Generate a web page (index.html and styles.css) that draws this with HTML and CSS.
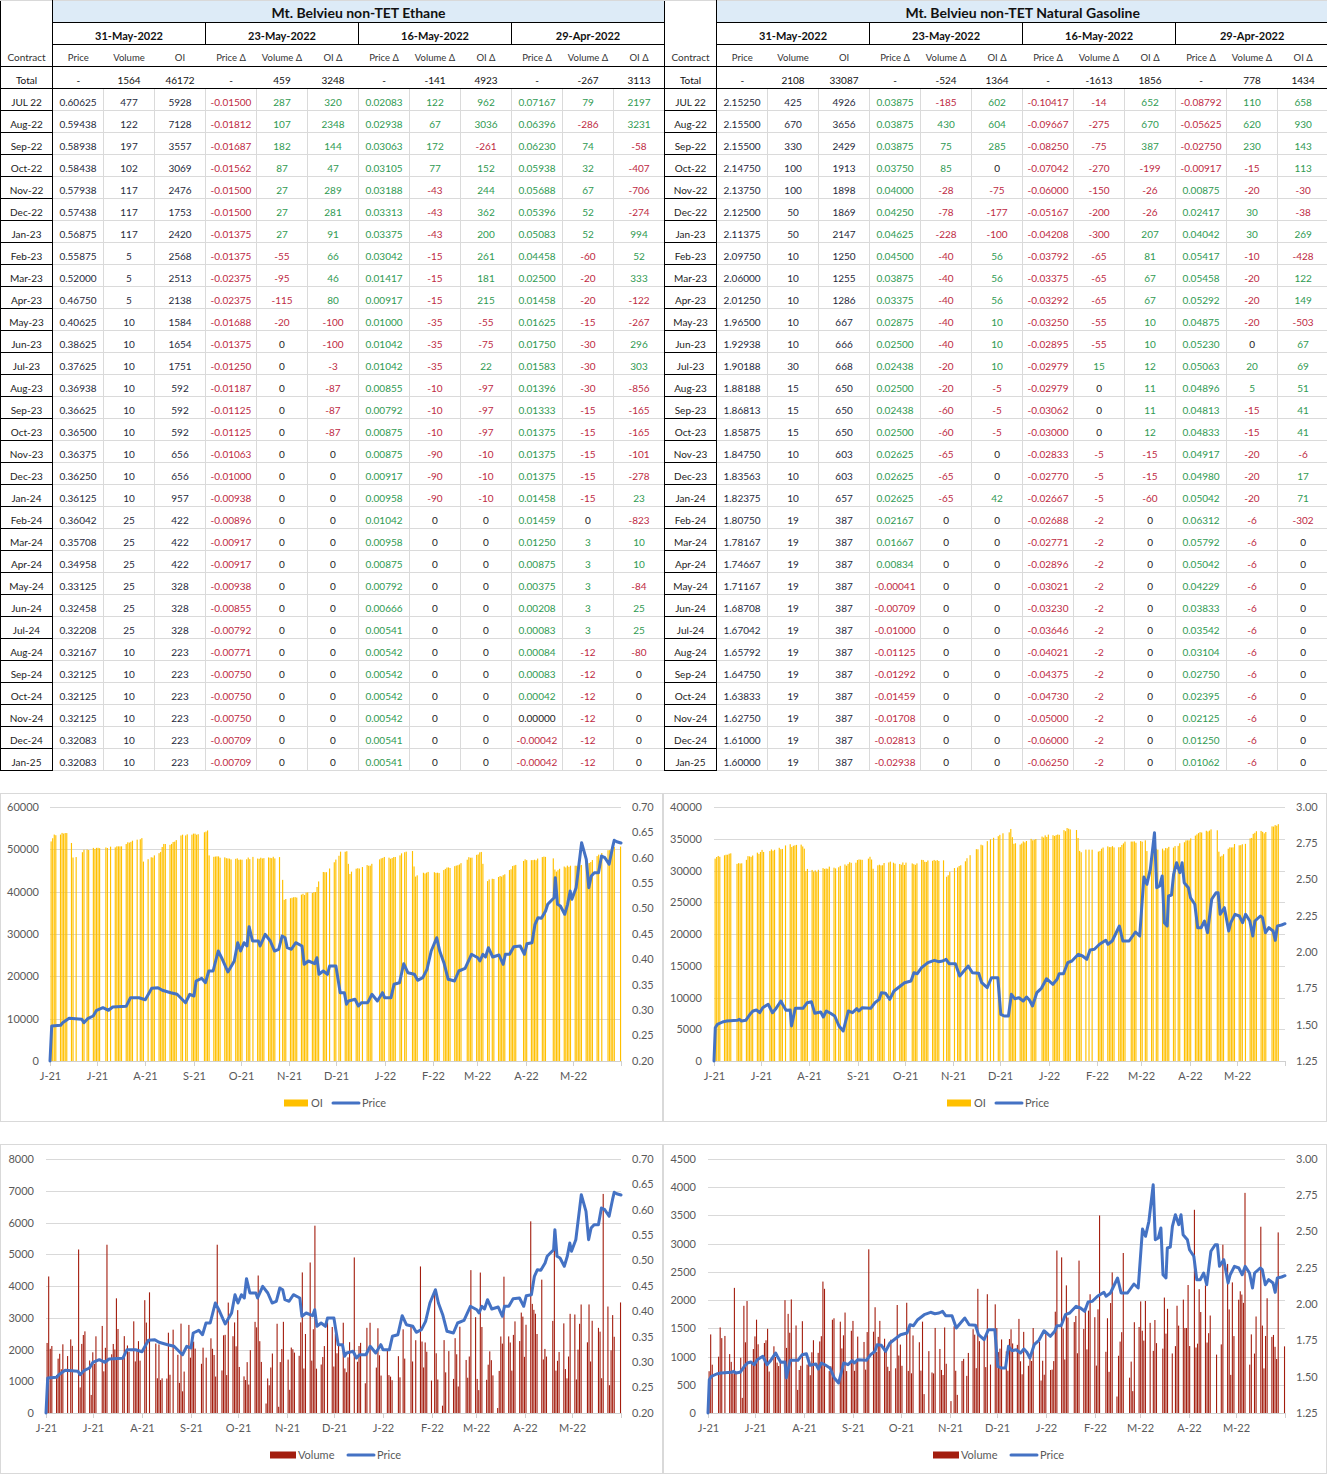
FILE: index.html
```html
<!DOCTYPE html>
<html lang="en">
<head>
<meta charset="utf-8">
<title>Mt. Belvieu non-TET</title>
<link rel="stylesheet" href="styles.css">
</head>
<body>
<div class="page">
  <div class="tables">
    <table class="tbl" id="t-eth"></table>
    <table class="tbl" id="t-gas"></table>
  </div>
  <div class="charts">
    <div class="chart" id="c1"></div>
    <div class="chart" id="c2"></div>
    <div class="chart" id="c3"></div>
    <div class="chart" id="c4"></div>
  </div>
</div>
<script src="app.js"></script>
</body>
</html>
```

FILE: styles.css
```css
html, body { margin: 0; padding: 0; background: #fff; }
body { font-family: Lato, "Liberation Sans", "DejaVu Sans", sans-serif; color: #222; width: 1327px; }
.page { display: flex; flex-direction: column; }
.tables { display: flex; }
.tbl { border-collapse: collapse; table-layout: fixed; width: 664px; }
.tbl + .tbl { margin-left: -1px; }
.tbl col.c-con { width: 52px; }
.tbl col.c-d { width: 51px; }
.tbl tr { height: 22px; }
.tbl td { padding: 4px 0 0 0; text-align: center; vertical-align: middle; font-size: 10px; white-space: nowrap; overflow: hidden; line-height: 1; }
.tbl td.con { border: 1px solid #000; }
.tbl td.con-top { border-left: 1px solid #000; border-right: 1px solid #000; border-top: 1px solid #d9d9d9; }
.tbl td.title { background: #ddebf7; border-top: 1px solid #d9d9d9; border-bottom: 1px solid #000; border-right: 1px solid #000; font-size: 14px; font-weight: 700; color: #111; padding-top: 2px; }
.tbl td.date { border: 1px solid #000; font-size: 11px; font-weight: 700; color: #111; }
.tbl tr.r-head td { border-bottom: 1px solid #000; font-size: 9.5px; color: #333; }
.tbl tr.r-head td.con { border-top: none; font-size: 10px; }
.tbl tr.r-total td { border-bottom: 1px solid #000; font-size: 10px; color: #111; }
.tbl tr.r-data td { border-right: 1px solid #dadada; border-bottom: 1px solid #dadada; }
.tbl tr.r-data td.con { border: 1px solid #000; }
.tbl td.pos { color: #2f9a52; }
.tbl td.neg { color: #be2a43; }
.tbl td.base { color: #1f2a3c; }

.charts { display: grid; grid-template-columns: 663px 664px; grid-template-rows: 329px 330px; row-gap: 22px; margin-top: 22px; }
.chart { border: 1px solid #d9d9d9; box-sizing: border-box; background: #fff; overflow: hidden; }
.chart svg { display: block; }
.grid { stroke: #d9d9d9; stroke-width: 1; }
.axis { stroke: #d0d0d0; stroke-width: 1; }
.ax { font-family: Lato, "Liberation Sans", sans-serif; font-size: 11px; fill: #595959; }
.leg { font-family: Lato, "Liberation Sans", sans-serif; font-size: 11px; fill: #595959; }
.price { fill: none; stroke: #4472c4; stroke-width: 3; stroke-linejoin: round; stroke-linecap: round; }
```

FILE: app.js
```js
(function () {
  var ETH = "Total|-|1564|46172|-|459|3248|-|-141|4923|-|-267|3113\n" +
"JUL 22|0.60625|477|5928|-0.01500|287|320|0.02083|122|962|0.07167|79|2197\n" +
"Aug-22|0.59438|122|7128|-0.01812|107|2348|0.02938|67|3036|0.06396|-286|3231\n" +
"Sep-22|0.58938|197|3557|-0.01687|182|144|0.03063|172|-261|0.06230|74|-58\n" +
"Oct-22|0.58438|102|3069|-0.01562|87|47|0.03105|77|152|0.05938|32|-407\n" +
"Nov-22|0.57938|117|2476|-0.01500|27|289|0.03188|-43|244|0.05688|67|-706\n" +
"Dec-22|0.57438|117|1753|-0.01500|27|281|0.03313|-43|362|0.05396|52|-274\n" +
"Jan-23|0.56875|117|2420|-0.01375|27|91|0.03375|-43|200|0.05083|52|994\n" +
"Feb-23|0.55875|5|2568|-0.01375|-55|66|0.03042|-15|261|0.04458|-60|52\n" +
"Mar-23|0.52000|5|2513|-0.02375|-95|46|0.01417|-15|181|0.02500|-20|333\n" +
"Apr-23|0.46750|5|2138|-0.02375|-115|80|0.00917|-15|215|0.01458|-20|-122\n" +
"May-23|0.40625|10|1584|-0.01688|-20|-100|0.01000|-35|-55|0.01625|-15|-267\n" +
"Jun-23|0.38625|10|1654|-0.01375|0|-100|0.01042|-35|-75|0.01750|-30|296\n" +
"Jul-23|0.37625|10|1751|-0.01250|0|-3|0.01042|-35|22|0.01583|-30|303\n" +
"Aug-23|0.36938|10|592|-0.01187|0|-87|0.00855|-10|-97|0.01396|-30|-856\n" +
"Sep-23|0.36625|10|592|-0.01125|0|-87|0.00792|-10|-97|0.01333|-15|-165\n" +
"Oct-23|0.36500|10|592|-0.01125|0|-87|0.00875|-10|-97|0.01375|-15|-165\n" +
"Nov-23|0.36375|10|656|-0.01063|0|0|0.00875|-90|-10|0.01375|-15|-101\n" +
"Dec-23|0.36250|10|656|-0.01000|0|0|0.00917|-90|-10|0.01375|-15|-278\n" +
"Jan-24|0.36125|10|957|-0.00938|0|0|0.00958|-90|-10|0.01458|-15|23\n" +
"Feb-24|0.36042|25|422|-0.00896|0|0|0.01042|0|0|0.01459|0|-823\n" +
"Mar-24|0.35708|25|422|-0.00917|0|0|0.00958|0|0|0.01250|3|10\n" +
"Apr-24|0.34958|25|422|-0.00917|0|0|0.00875|0|0|0.00875|3|10\n" +
"May-24|0.33125|25|328|-0.00938|0|0|0.00792|0|0|0.00375|3|-84\n" +
"Jun-24|0.32458|25|328|-0.00855|0|0|0.00666|0|0|0.00208|3|25\n" +
"Jul-24|0.32208|25|328|-0.00792|0|0|0.00541|0|0|0.00083|3|25\n" +
"Aug-24|0.32167|10|223|-0.00771|0|0|0.00542|0|0|0.00084|-12|-80\n" +
"Sep-24|0.32125|10|223|-0.00750|0|0|0.00542|0|0|0.00083|-12|0\n" +
"Oct-24|0.32125|10|223|-0.00750|0|0|0.00542|0|0|0.00042|-12|0\n" +
"Nov-24|0.32125|10|223|-0.00750|0|0|0.00542|0|0|0.00000|-12|0\n" +
"Dec-24|0.32083|10|223|-0.00709|0|0|0.00541|0|0|-0.00042|-12|0\n" +
"Jan-25|0.32083|10|223|-0.00709|0|0|0.00541|0|0|-0.00042|-12|0";

  var GAS = "Total|-|2108|33087|-|-524|1364|-|-1613|1856|-|778|1434\n" +
"JUL 22|2.15250|425|4926|0.03875|-185|602|-0.10417|-14|652|-0.08792|110|658\n" +
"Aug-22|2.15500|670|3656|0.03875|430|604|-0.09667|-275|670|-0.05625|620|930\n" +
"Sep-22|2.15500|330|2429|0.03875|75|285|-0.08250|-75|387|-0.02750|230|143\n" +
"Oct-22|2.14750|100|1913|0.03750|85|0|-0.07042|-270|-199|-0.00917|-15|113\n" +
"Nov-22|2.13750|100|1898|0.04000|-28|-75|-0.06000|-150|-26|0.00875|-20|-30\n" +
"Dec-22|2.12500|50|1869|0.04250|-78|-177|-0.05167|-200|-26|0.02417|30|-38\n" +
"Jan-23|2.11375|50|2147|0.04625|-228|-100|-0.04208|-300|207|0.04042|30|269\n" +
"Feb-23|2.09750|10|1250|0.04500|-40|56|-0.03792|-65|81|0.05417|-10|-428\n" +
"Mar-23|2.06000|10|1255|0.03875|-40|56|-0.03375|-65|67|0.05458|-20|122\n" +
"Apr-23|2.01250|10|1286|0.03375|-40|56|-0.03292|-65|67|0.05292|-20|149\n" +
"May-23|1.96500|10|667|0.02875|-40|10|-0.03250|-55|10|0.04875|-20|-503\n" +
"Jun-23|1.92938|10|666|0.02500|-40|10|-0.02895|-55|10|0.05230|0|67\n" +
"Jul-23|1.90188|30|668|0.02438|-20|10|-0.02979|15|12|0.05063|20|69\n" +
"Aug-23|1.88188|15|650|0.02500|-20|-5|-0.02979|0|11|0.04896|5|51\n" +
"Sep-23|1.86813|15|650|0.02438|-60|-5|-0.03062|0|11|0.04813|-15|41\n" +
"Oct-23|1.85875|15|650|0.02500|-60|-5|-0.03000|0|12|0.04833|-15|41\n" +
"Nov-23|1.84750|10|603|0.02625|-65|0|-0.02833|-5|-15|0.04917|-20|-6\n" +
"Dec-23|1.83563|10|603|0.02625|-65|0|-0.02770|-5|-15|0.04980|-20|17\n" +
"Jan-24|1.82375|10|657|0.02625|-65|42|-0.02667|-5|-60|0.05042|-20|71\n" +
"Feb-24|1.80750|19|387|0.02167|0|0|-0.02688|-2|0|0.06312|-6|-302\n" +
"Mar-24|1.78167|19|387|0.01667|0|0|-0.02771|-2|0|0.05792|-6|0\n" +
"Apr-24|1.74667|19|387|0.00834|0|0|-0.02896|-2|0|0.05042|-6|0\n" +
"May-24|1.71167|19|387|-0.00041|0|0|-0.03021|-2|0|0.04229|-6|0\n" +
"Jun-24|1.68708|19|387|-0.00709|0|0|-0.03230|-2|0|0.03833|-6|0\n" +
"Jul-24|1.67042|19|387|-0.01000|0|0|-0.03646|-2|0|0.03542|-6|0\n" +
"Aug-24|1.65792|19|387|-0.01125|0|0|-0.04021|-2|0|0.03104|-6|0\n" +
"Sep-24|1.64750|19|387|-0.01292|0|0|-0.04375|-2|0|0.02750|-6|0\n" +
"Oct-24|1.63833|19|387|-0.01459|0|0|-0.04730|-2|0|0.02395|-6|0\n" +
"Nov-24|1.62750|19|387|-0.01708|0|0|-0.05000|-2|0|0.02125|-6|0\n" +
"Dec-24|1.61000|19|387|-0.02813|0|0|-0.06000|-2|0|0.01250|-6|0\n" +
"Jan-25|1.60000|19|387|-0.02938|0|0|-0.06250|-2|0|0.01062|-6|0";

  var DATES = ["31-May-2022", "23-May-2022", "16-May-2022", "29-Apr-2022"];

  function buildTable(id, title, data) {
    var h = '<colgroup><col class="c-con">';
    for (var i = 0; i < 12; i++) h += '<col class="c-d">';
    h += '</colgroup>';
    h += '<tr class="r-title"><td class="con-top" rowspan="2"></td><td class="title" colspan="12">' + title + '</td></tr>';
    h += '<tr class="r-date">' + DATES.map(function (d) { return '<td class="date" colspan="3">' + d + '</td>'; }).join('') + '</tr>';
    var hdr = ['Price', 'Volume', 'OI'];
    for (var k = 0; k < 3; k++) hdr = hdr.concat(['Price \u0394', 'Volume \u0394', 'OI \u0394']);
    h += '<tr class="r-head"><td class="con">Contract</td>' + hdr.map(function (x) { return '<td>' + x + '</td>'; }).join('') + '</tr>';
    data.split('\n').forEach(function (line, ri) {
      var c = line.split('|');
      if (ri === 0) {
        h += '<tr class="r-total"><td class="con">' + c[0] + '</td>';
        for (var j = 1; j < 13; j++) h += '<td>' + c[j] + '</td>';
        h += '</tr>';
        return;
      }
      h += '<tr class="r-data"><td class="con">' + c[0] + '</td>';
      for (var j2 = 1; j2 < 13; j2++) {
        var cls = 'base';
        if (j2 >= 4) {
          if (c[j2].charAt(0) === '-') cls = 'neg';
          else if (parseFloat(c[j2]) !== 0) cls = 'pos';
          else cls = '';
        }
        h += '<td' + (cls ? ' class="' + cls + '"' : '') + '>' + c[j2] + '</td>';
      }
      h += '</tr>';
    });
    document.getElementById(id).innerHTML = h;
  }
  buildTable('t-eth', 'Mt. Belvieu non-TET Ethane', ETH);
  buildTable('t-gas', 'Mt. Belvieu non-TET Natural Gasoline', GAS);

  /* ---------- charts ---------- */
  var ETH_P = [[120,840],[124,735],[145,733],[150,725],[165,712],[195,715],[200,725],[210,712],[222,705],[230,688],[245,680],[258,688],[268,678],[300,676],[310,650],[330,650],[345,656],[360,622],[375,620],[385,628],[405,635],[420,640],[440,665],[450,640],[460,645],[465,600],[478,592],[487,605],[495,570],[505,570],[517,510],[525,530],[540,573],[555,540],[563,485],[570,510],[578,485],[585,495],[590,437],[598,480],[612,480],[616,495],[628,460],[640,480],[650,510],[660,505],[668,465],[675,470],[680,500],[690,505],[700,485],[715,495],[720,550],[730,540],[745,548],[750,530],[755,580],[765,570],[775,580],[780,555],[795,555],[805,635],[815,635],[820,670],[825,660],[840,655],[848,675],[855,665],[870,665],[880,640],[893,660],[905,635],[910,650],[925,650],[932,610],[945,605],[955,548],[965,575],[980,580],[988,598],[1000,590],[1010,565],[1020,510],[1033,470],[1040,510],[1050,545],[1060,595],[1075,600],[1085,570],[1100,562],[1115,520],[1130,530],[1135,540],[1142,520],[1148,528],[1155,500],[1165,528],[1180,522],[1190,550],[1195,520],[1205,520],[1215,497],[1230,495],[1240,520],[1246,488],[1258,485],[1265,430],[1272,410],[1280,412],[1290,390],[1295,370],[1310,350],[1313,290],[1318,370],[1325,375],[1335,400],[1342,370],[1348,330],[1352,355],[1362,320],[1375,185],[1386,235],[1392,320],[1398,285],[1405,275],[1415,275],[1422,225],[1430,230],[1440,250],[1448,200],[1452,178],[1458,182],[1468,186]];
  var GAS_P = [[120,810],[123,710],[128,700],[140,693],[150,690],[175,688],[180,685],[185,690],[195,688],[205,670],[212,660],[220,657],[228,665],[235,650],[248,640],[258,665],[265,655],[278,630],[282,640],[290,658],[300,657],[303,705],[312,652],[330,652],[340,635],[350,632],[358,667],[372,663],[378,678],[385,660],[395,667],[405,675],[415,705],[425,720],[437,660],[447,665],[457,653],[462,660],[470,650],[490,652],[500,635],[510,625],[515,605],[525,607],[535,625],[545,600],[560,585],[570,575],[585,570],[592,545],[600,548],[610,530],[625,515],[640,508],[650,512],[660,510],[668,505],[675,518],[690,518],[700,555],[710,540],[720,525],[730,545],[745,547],[752,575],[765,590],[775,560],[790,560],[797,670],[805,675],[815,675],[822,610],[830,623],[840,620],[850,630],[858,618],[865,628],[872,645],[882,605],[893,592],[905,563],[920,580],[930,565],[935,548],[945,548],[955,515],[965,510],[980,490],[990,495],[1000,505],[1008,477],[1018,475],[1030,460],[1045,448],[1050,460],[1060,450],[1077,405],[1085,450],[1100,450],[1115,423],[1125,435],[1135,258],[1142,280],[1150,235],[1160,125],[1165,290],[1172,285],[1178,255],[1183,395],[1190,405],[1193,315],[1200,312],[1205,250],[1212,215],[1220,245],[1225,215],[1230,275],[1240,290],[1245,320],[1255,340],[1262,410],[1270,410],[1278,390],[1285,425],[1295,325],[1305,305],[1310,305],[1315,370],[1325,350],[1335,420],[1340,395],[1350,370],[1360,375],[1368,395],[1375,370],[1385,390],[1392,435],[1397,390],[1410,375],[1415,380],[1422,425],[1430,410],[1440,420],[1445,448],[1450,405],[1460,402],[1468,398]];
  var ETH_OI = [[120,52],[128,53.5],[165,54],[172,48],[185,48.5],[200,50],[260,50.5],[290,51],[320,52.5],[335,52.5],[338,47],[355,48],[378,49],[385,51.5],[400,51],[415,52],[430,53.5],[470,53.5],[490,54.5],[493,48.5],[530,48],[545,47.5],[600,48],[665,48],[668,38],[690,38.5],[720,39.5],[745,40],[750,42],[760,44.5],[775,45],[790,47],[805,49.5],[820,49.5],[823,44],[835,45],[860,46],[880,46.5],[905,48],[935,48],[955,49.5],[975,49.5],[978,43.5],[990,44.5],[1040,44.5],[1050,45.5],[1080,46],[1105,48],[1115,48],[1130,49],[1138,49.5],[1141,42.5],[1160,43],[1180,43.5],[1195,44],[1215,46.5],[1240,47.5],[1260,47.5],[1290,48.5],[1305,48.5],[1310,44.5],[1325,45.5],[1340,46],[1360,46],[1395,47],[1410,48.5],[1425,49.5],[1440,50],[1468,51]];
  var GAS_OI = [[120,32],[140,32.5],[165,33],[172,31],[185,31],[195,32],[210,32.5],[230,33],[270,33.5],[305,34],[330,34],[334,30],[360,30],[380,30.5],[415,30.5],[430,31],[455,31.5],[488,32],[493,30.5],[510,31],[530,31.2],[590,31],[610,31.5],[662,31.8],[667,29],[675,30],[690,30.5],[710,31.5],[735,33],[750,34],[765,34.5],[790,35.5],[810,36],[820,36.5],[824,34],[850,34.5],[870,35],[900,35.5],[930,35.5],[950,36.5],[975,36.5],[979,33],[1000,33.5],[1025,33],[1045,34],[1075,33.5],[1085,34.5],[1125,34.5],[1135,35],[1140,33],[1190,33.5],[1210,34],[1230,34.5],[1250,35.5],[1270,36],[1290,36.5],[1307,36.5],[1310,32],[1325,33],[1345,34],[1375,34],[1385,35],[1395,36],[1420,36],[1440,37],[1468,37.5]];

  function interp(pts, x) {
    if (x <= pts[0][0]) return pts[0][1];
    for (var i = 1; i < pts.length; i++) {
      if (x <= pts[i][0]) {
        var a = pts[i - 1], b = pts[i];
        return a[1] + (b[1] - a[1]) * (x - a[0]) / (b[0] - a[0]);
      }
    }
    return pts[pts.length - 1][1];
  }
  function rng(seed) { var s = seed >>> 0; return function () { s = (Math.imul(s, 1664525) + 1013904223) >>> 0; return s / 4294967296; }; }

  var HOL = { "2021-7-5": 1, "2021-9-6": 1, "2021-11-25": 1, "2021-12-24": 1, "2022-1-17": 1, "2022-2-21": 1, "2022-4-15": 1, "2022-5-30": 1 };
  var DAYS = [];
  for (var d = 0; d < 365; d++) {
    var dt = new Date(2021, 5, 1 + d);
    var w = dt.getDay();
    var key = dt.getFullYear() + '-' + (dt.getMonth() + 1) + '-' + dt.getDate();
    if (w === 0 || w === 6 || HOL[key]) continue;
    DAYS.push(d);
  }

  function barsOI(env, seed) {
    var r = rng(seed);
    return DAYS.map(function (d) {
      var zx = 120 + (d / 365) * 1348;
      var v = (interp(env, zx) + (r() - 0.5) * 0.5) * 1000;
      if (r() < 0.06) v = 0;
      return v;
    });
  }
  function barsVol(kind, seed, spikes) {
    var r = rng(seed);
    var out = DAYS.map(function (d) {
      var f = d / 365, u = r(), v;
      if (kind === 'eth') {
        if (u < 0.09) v = 3000 + r() * 2000;
        else if (u < 0.17) v = 100 + r() * 900;
        else v = 1000 + r() * 1900;
        if (f > 0.82) v = v * 1.15 + 300;
      } else {
        if (u < 0.09) v = 1700 + r() * 700;
        else if (u < 0.16) v = 200 + r() * 500;
        else v = 650 + r() * 1050;
        if (f > 0.6) v = v * 1.35;
      }
      if (r() < 0.05) v = 0;
      return v;
    });
    spikes.forEach(function (s) {
      var best = 0, bd = 1e9;
      DAYS.forEach(function (d, i) { var dd = Math.abs(d / 365 - s[0]); if (dd < bd) { bd = dd; best = i; } });
      out[best] = s[1];
    });
    return out;
  }

  var MONTHS = [0, 30, 61, 92, 122, 153, 183, 214, 245, 273, 304, 334, 365];
  var MLAB = ["J-21", "J-21", "A-21", "S-21", "O-21", "N-21", "D-21", "J-22", "F-22", "M-22", "A-22", "M-22"];

  function drawChart(id, c) {
    var W = 661, H = c.H, L = c.L, R = c.R, T = c.T, B = c.B, PW = R - L, PH = B - T;
    var s = '<svg width="' + W + '" height="' + H + '" viewBox="0 0 ' + W + ' ' + H + '">';
    var n = Math.round(c.lmax / c.lstep), i, y;
    for (i = 0; i <= n; i++) {
      y = Math.round(B - i * PH / n) + 0.5;
      if (i > 0) s += '<line class="grid" x1="' + L + '" x2="' + R + '" y1="' + y + '" y2="' + y + '"/>';
      s += '<text class="ax" x="' + c.lx + '" y="' + y + '" dy="0.35em" text-anchor="end">' + (i * c.lstep) + '</text>';
    }
    var m = Math.round((c.rmax - c.rmin) / c.rstep);
    for (i = 0; i <= m; i++) {
      y = B - i * PH / m;
      s += '<text class="ax" x="' + c.rx + '" y="' + y.toFixed(1) + '" dy="0.35em">' + (c.rmin + i * c.rstep).toFixed(2) + '</text>';
    }
    c.bars.forEach(function (v, k) {
      if (v <= 0) return;
      var d = DAYS[k];
      var x = L + (d + 0.35) / 365 * PW;
      var hgt = Math.min(v / c.lmax, 1) * PH;
      s += '<rect x="' + x.toFixed(2) + '" y="' + (B - hgt).toFixed(2) + '" width="' + c.bw + '" height="' + hgt.toFixed(2) + '" fill="' + c.color + '"/>';
    });
    s += '<line class="axis" x1="' + L + '" x2="' + R + '" y1="' + (B + 0.5) + '" y2="' + (B + 0.5) + '"/>';
    MONTHS.forEach(function (md, k) {
      var x = Math.round(L + md / 365 * PW) + 0.5;
      s += '<line class="axis" x1="' + x + '" x2="' + x + '" y1="' + B + '" y2="' + (B + 5) + '"/>';
      if (k < 12) s += '<text class="ax" x="' + x + '" y="' + c.xly + '" dy="0.35em" text-anchor="middle">' + MLAB[k] + '</text>';
    });
    var pts = c.price.map(function (p) {
      var f = (p[0] - 120) / 1348;
      var val = c.pTop - (p[1] - c.pY0) / c.pYs * (c.pTop - c.pBot);
      var x = L + f * PW;
      var yy = B - (val - c.rmin) / (c.rmax - c.rmin) * PH;
      return x.toFixed(1) + ',' + yy.toFixed(1);
    }).join(' ');
    s += '<polyline class="price" points="' + pts + '"/>';
    var ly = c.ly;
    if (c.legend === 'OI') {
      s += '<rect x="283" y="' + (ly - 3.5) + '" width="24" height="7" fill="' + c.color + '"/>';
      s += '<text class="leg" x="310" y="' + ly + '" dy="0.35em">OI</text>';
      s += '<line x1="332" x2="358" y1="' + ly + '" y2="' + ly + '" stroke="#4472c4" stroke-width="3" stroke-linecap="round"/>';
      s += '<text class="leg" x="361" y="' + ly + '" dy="0.35em">Price</text>';
    } else {
      s += '<rect x="269" y="' + (ly - 3.5) + '" width="26" height="7" fill="' + c.color + '"/>';
      s += '<text class="leg" x="297" y="' + ly + '" dy="0.35em">Volume</text>';
      s += '<line x1="347" x2="373" y1="' + ly + '" y2="' + ly + '" stroke="#4472c4" stroke-width="3" stroke-linecap="round"/>';
      s += '<text class="leg" x="376" y="' + ly + '" dy="0.35em">Price</text>';
    }
    s += '</svg>';
    document.getElementById(id).innerHTML = s;
  }

  var ethMap = { pTop: 0.70, pBot: 0.20, pY0: 78, pYs: 762 };
  var gasMap = { pTop: 3.00, pBot: 1.25, pY0: 48, pYs: 762 };
  function ext(a, b) { var o = {}; for (var k in a) o[k] = a[k]; for (var k2 in b) o[k2] = b[k2]; return o; }

  drawChart('c1', ext(ethMap, { H: 327, L: 49, R: 620, T: 13, B: 267, lx: 38, rx: 631, xly: 282, ly: 309,
    lmax: 60000, lstep: 10000, rmin: 0.20, rmax: 0.70, rstep: 0.05,
    bars: barsOI(ETH_OI, 11), color: '#ffc000', bw: 1.15, price: ETH_P, legend: 'OI' }));
  drawChart('c2', ext(gasMap, { H: 327, L: 50, R: 621, T: 13, B: 267, lx: 38, rx: 632, xly: 282, ly: 309,
    lmax: 40000, lstep: 5000, rmin: 1.25, rmax: 3.00, rstep: 0.25,
    bars: barsOI(GAS_OI, 23), color: '#ffc000', bw: 1.15, price: GAS_P, legend: 'OI' }));
  drawChart('c3', ext(ethMap, { H: 328, L: 45, R: 620, T: 14, B: 268, lx: 33, rx: 631, xly: 283, ly: 310,
    lmax: 8000, lstep: 1000, rmin: 0.20, rmax: 0.70, rstep: 0.05,
    bars: barsVol('eth', 37, [[0.002, 4300], [0.055, 5150], [0.106, 5300], [0.30, 5300], [0.466, 5900], [0.531, 4900], [0.968, 6900], [0.74, 4500], [0.86, 4200]]),
    color: '#a31d0e', bw: 1.1, price: ETH_P, legend: 'Volume' }));
  drawChart('c4', ext(gasMap, { H: 328, L: 44, R: 621, T: 14, B: 268, lx: 32, rx: 632, xly: 283, ly: 310,
    lmax: 4500, lstep: 500, rmin: 1.25, rmax: 3.00, rstep: 0.25,
    bars: barsVol('gas', 53, [[0.276, 2900], [0.678, 3500], [0.84, 3600], [0.93, 3900], [0.20, 2200], [0.465, 2200], [0.64, 2700], [0.955, 3300]]),
    color: '#a31d0e', bw: 1.1, price: GAS_P, legend: 'Volume' }));
})();
```
